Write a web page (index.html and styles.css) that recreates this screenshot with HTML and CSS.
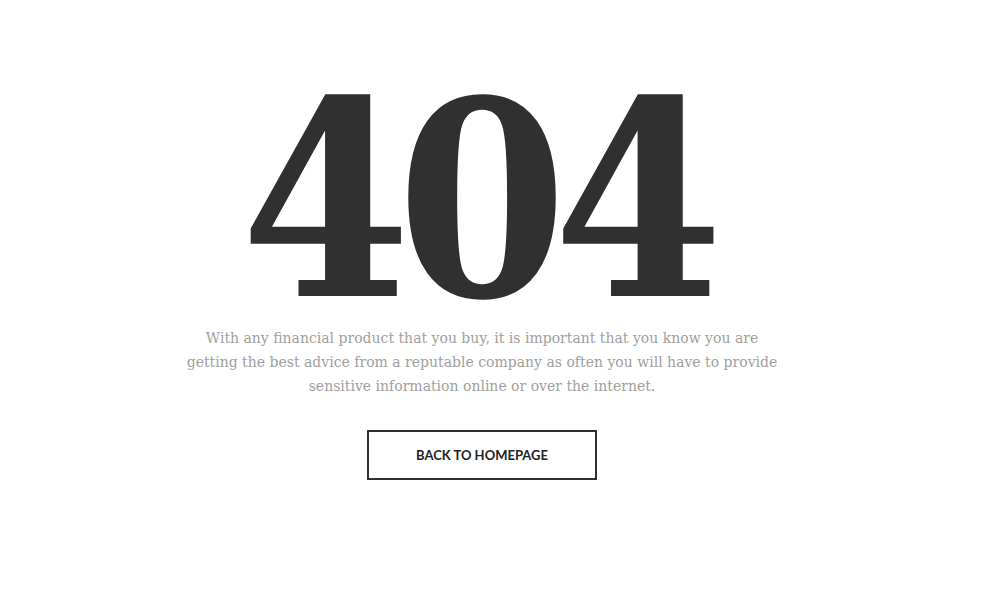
FILE: index.html
```html
<!DOCTYPE html>
<html>
<head>
<meta charset="utf-8">
<link rel="stylesheet" href="styles.css">
</head>
<body>
<main class="page">
  <h1 class="code">404</h1>
  <p class="text">With any financial product that you buy, it is important that you know you are getting the best advice from a reputable company as often you will have to provide sensitive information online or over the internet.</p>
  <a class="btn" href="#">BACK TO HOMEPAGE</a>
</main>
</body>
</html>
```
FILE: styles.css
```css
html, body {
  margin: 0;
  padding: 0;
  background: #fff;
}
.page {
  width: 964px;
  display: flex;
  flex-direction: column;
  align-items: center;
  padding-top: 76px;
}
.code {
  margin: 0;
  font-family: "DejaVu Serif Condensed", "DejaVu Serif", serif;
  font-weight: 700;
  font-size: 272px;
  line-height: 250px;
  color: #303030;
  letter-spacing: -14px;
  padding-right: 14px;
}
.text {
  margin: 0;
  width: 600px;
  text-align: center;
  font-family: "DejaVu Serif", serif;
  font-size: 14px;
  line-height: 24px;
  color: #a0a0a0;
}
.btn {
  margin-top: 32px;
  box-sizing: border-box;
  width: 230px;
  height: 50px;
  border: 2px solid #303030;
  display: flex;
  align-items: center;
  justify-content: center;
  font-family: Lato, sans-serif;
  font-weight: 700;
  font-size: 13px;
  color: #222;
  text-decoration: none;
}
```
